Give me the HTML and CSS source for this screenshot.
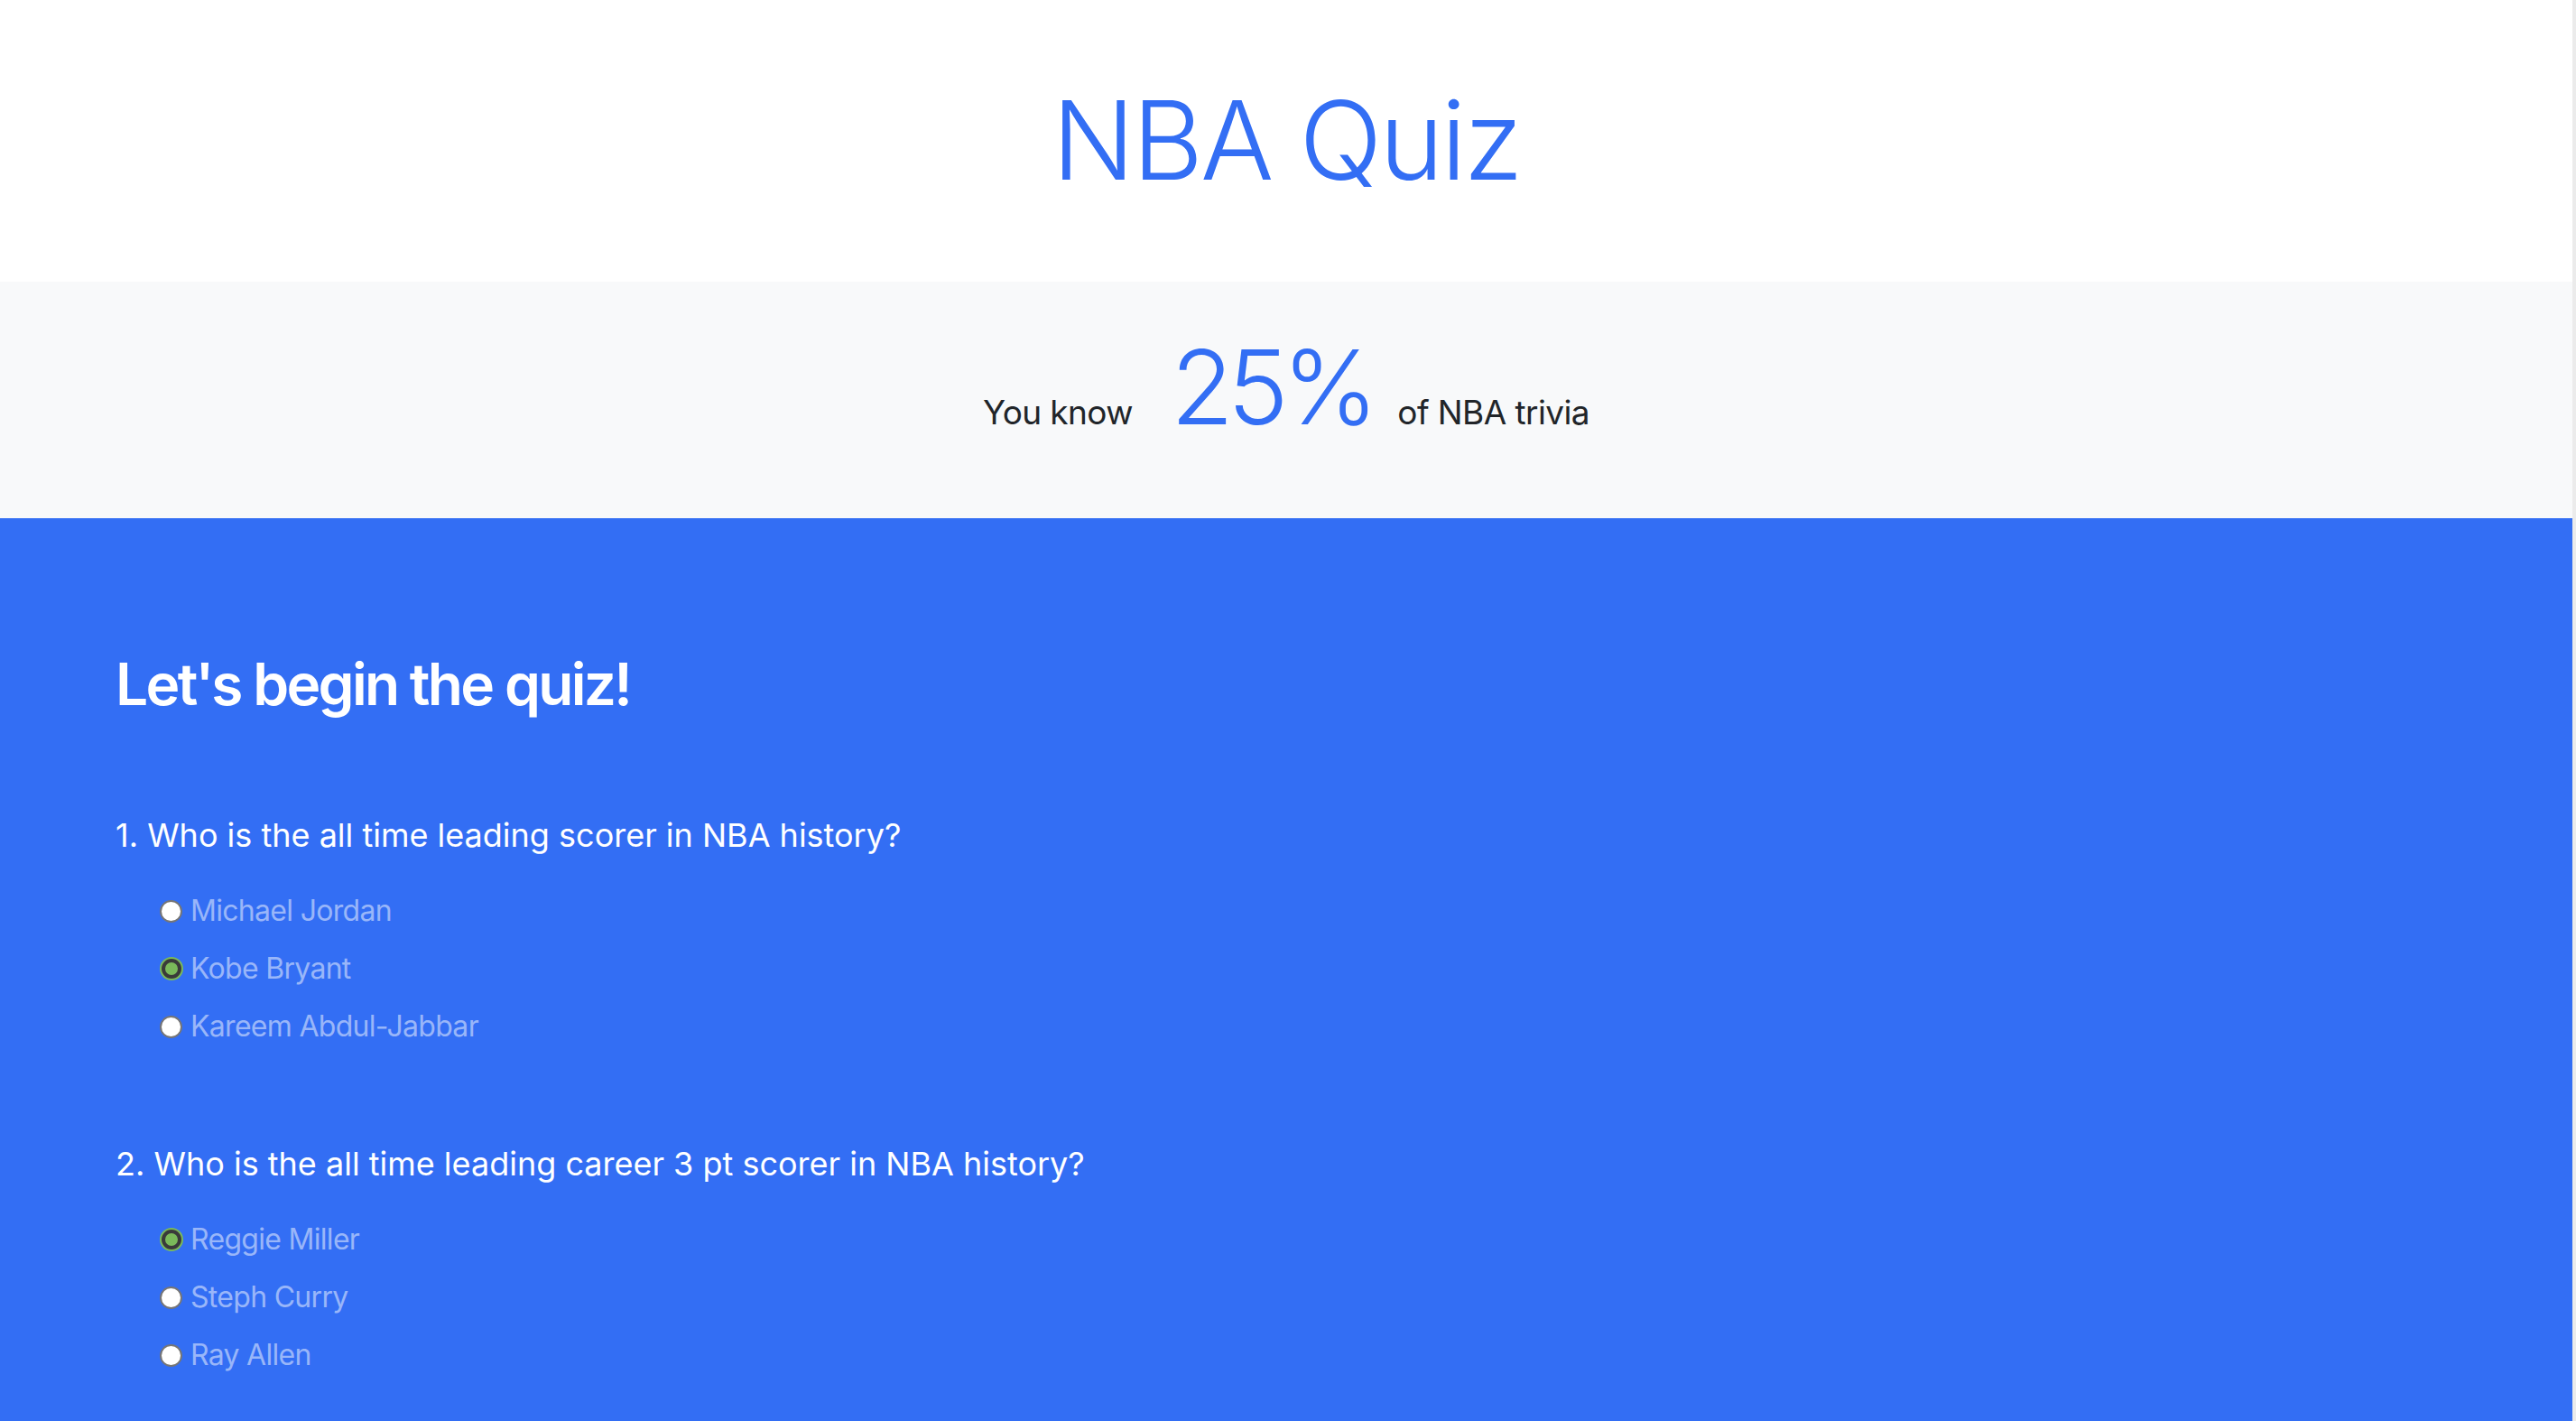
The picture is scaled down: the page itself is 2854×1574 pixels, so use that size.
FILE: index.html
```html
<!DOCTYPE html>
<html lang="en">
<head>
<meta charset="utf-8">
<title>NBA Quiz</title>
<link rel="stylesheet" href="styles.css">
</head>
<body>
<div class="page">
  <header class="masthead">
    <h1 class="title">NBA Quiz</h1>
  </header>
  <section class="score">
    <div class="score-row">
      <span class="score-text">You know</span>
      <span class="score-value">25%</span>
      <span class="score-text">of NBA trivia</span>
    </div>
  </section>
  <main class="quiz">
    <h2 class="quiz-heading">Let's begin the quiz!</h2>
    <div class="question">
      <p class="question-text">1. Who is the all time leading scorer in NBA history?</p>
      <label class="option"><input type="radio" name="q1" class="radio"><span>Michael Jordan</span></label>
      <label class="option"><input type="radio" name="q1" class="radio" checked><span>Kobe Bryant</span></label>
      <label class="option"><input type="radio" name="q1" class="radio"><span>Kareem Abdul-Jabbar</span></label>
    </div>
    <div class="question">
      <p class="question-text">2. Who is the all time leading career 3 pt scorer in NBA history?</p>
      <label class="option"><input type="radio" name="q2" class="radio" checked><span>Reggie Miller</span></label>
      <label class="option"><input type="radio" name="q2" class="radio"><span>Steph Curry</span></label>
      <label class="option"><input type="radio" name="q2" class="radio"><span>Ray Allen</span></label>
    </div>
  </main>
</div>
</body>
</html>
```
FILE: styles.css
```css
html {
  background: #ebebeb;
}
body {
  margin: 0 4px 0 0;
  font-family: Inter, "Noto Sans", "Liberation Sans", sans-serif;
  color: #212529;
}
.page {
  display: flex;
  flex-direction: column;
  height: 1574px;
  overflow: hidden;
  background: #336ef4;
}
.masthead {
  flex: none;
  height: 312px;
  background: #ffffff;
  display: flex;
  align-items: center;
  justify-content: center;
}
.title {
  margin: 0;
  font-size: 121px;
  font-weight: 300;
  line-height: 1.2;
  color: #336ef4;
  letter-spacing: -3px;
}
.score {
  flex: none;
  height: 262px;
  box-sizing: border-box;
  background: #f8f9fa;
  display: flex;
  align-items: center;
  justify-content: center;
  padding-bottom: 28px;
}
.score-row {
  display: flex;
  align-items: baseline;
}
.score-text {
  font-size: 37px;
  font-weight: 400;
  letter-spacing: -0.6px;
  color: #212529;
}
.score-value {
  font-size: 114px;
  font-weight: 300;
  line-height: 1.2;
  letter-spacing: -7px;
  color: #336ef4;
  margin: 0 28px 0 42px;
}
.quiz {
  padding: 145px 0 0 128px;
  color: #ffffff;
}
.quiz-heading {
  margin: 0 0 107px;
  font-size: 64px;
  font-weight: 600;
  line-height: 78px;
  letter-spacing: -2.7px;
}
.question {
  display: flex;
  flex-direction: column;
  margin-bottom: 99px;
}
.question-text {
  margin: 0 0 30px;
  font-size: 36px;
  line-height: 43px;
  font-weight: 400;
  letter-spacing: 0;
}
.option {
  display: flex;
  align-items: center;
  height: 64px;
  font-size: 32px;
  line-height: 64px;
  letter-spacing: -0.7px;
  color: #99b6f9;
  padding-left: 49px;
}
.radio {
  appearance: none;
  -webkit-appearance: none;
  flex: none;
  width: 25px;
  height: 25px;
  margin: 0 9px 0 0;
  border-radius: 50%;
  box-sizing: border-box;
  background: #ffffff;
  border: 2px solid #767676;
}
.radio:checked {
  background: #7ab95a;
  border: 4px solid #3a3a3a;
  box-shadow: 0 0 0 2px #7ab95a;
  width: 22px;
  height: 22px;
  margin: 0 10px 0 2px;
}
```
